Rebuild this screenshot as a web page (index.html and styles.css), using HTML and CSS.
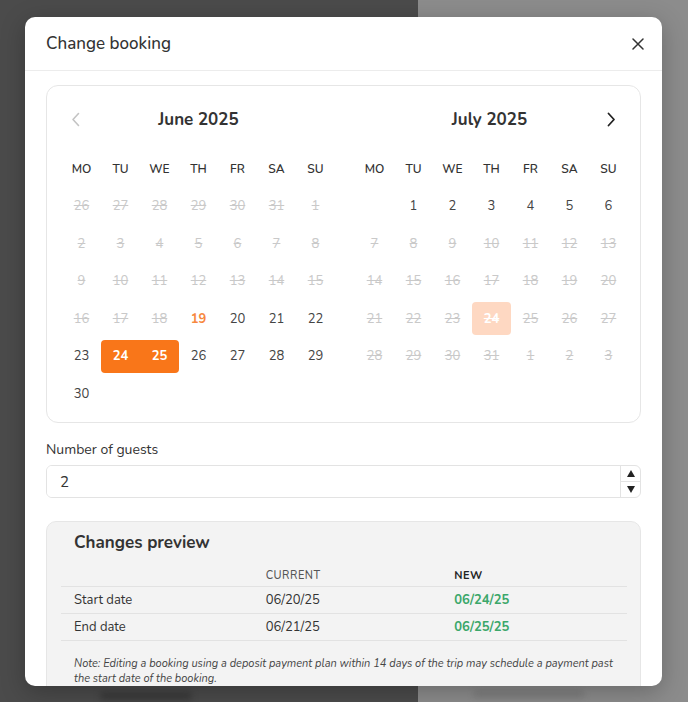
FILE: index.html
```html
<!DOCTYPE html>
<html lang="en">
<head>
    <meta charset="UTF-8">
    <meta name="viewport" content="width=device-width, initial-scale=1.0">
    <title>Change booking</title>
    <link rel="stylesheet" href="styles.css">
</head>
<body>
    <div class="page">
        <div class="page-main">
            <span class="ghost ghost-bottom"></span>
        </div>
        <div class="page-side">
            <span class="ghost ghost-side"></span>
        </div>
    </div>

    <div class="modal">
        <div class="modal-header">
            <h2>Change booking</h2>
            <button class="close" aria-label="Close">
                <svg width="12" height="12" viewBox="0 0 12 12"><path d="M1 1L11 11M11 1L1 11" stroke="#333" stroke-width="1.5" stroke-linecap="round"/></svg>
            </button>
        </div>

        <div class="modal-body">
            <div class="calendar">
                <div class="month">
                    <div class="month-head">
                        <button class="nav nav-disabled" aria-label="Previous month">
                            <svg width="9" height="15" viewBox="0 0 9 15"><path d="M7.5 1.5L2 7.5L7.5 13.5" fill="none" stroke="#c4c4c4" stroke-width="1.6" stroke-linecap="round" stroke-linejoin="round"/></svg>
                        </button>
                        <span class="month-title">June 2025</span>
                        <span class="nav-space"></span>
                    </div>
                    <div class="days" id="june"></div>
                </div>
                <div class="month">
                    <div class="month-head">
                        <span class="nav-space"></span>
                        <span class="month-title">July 2025</span>
                        <button class="nav nav-next" aria-label="Next month">
                            <svg width="9" height="15" viewBox="0 0 9 15"><path d="M1.5 1.5L7 7.5L1.5 13.5" fill="none" stroke="#222" stroke-width="1.8" stroke-linecap="round" stroke-linejoin="round"/></svg>
                        </button>
                    </div>
                    <div class="days" id="july"></div>
                </div>
            </div>

            <div class="field">
                <label for="guests">Number of guests</label>
                <div class="number-input">
                    <input type="text" id="guests" value="2">
                    <div class="spinner">
                        <span class="spin-up"></span>
                        <span class="spin-down"></span>
                    </div>
                </div>
            </div>

            <div class="preview">
                <h3>Changes preview</h3>
                <table>
                    <thead>
                        <tr><th></th><th>Current</th><th class="th-new">New</th></tr>
                    </thead>
                    <tbody>
                        <tr><td>Start date</td><td>06/20/25</td><td class="new">06/24/25</td></tr>
                        <tr><td>End date</td><td>06/21/25</td><td class="new">06/25/25</td></tr>
                    </tbody>
                </table>
                <p class="note">Note: Editing a booking using a deposit payment plan within 14 days of the trip may schedule a payment past the start date of the booking.</p>
            </div>
        </div>
    </div>

    <script>
        const weekdays = ['MO', 'TU', 'WE', 'TH', 'FR', 'SA', 'SU'];

        // [label, class]
        const june = [];
        [26, 27, 28, 29, 30, 31].forEach(d => june.push([d, 'off']));
        for (let d = 1; d <= 18; d++) june.push([d, 'off']);
        june.push([19, 'today']);
        for (let d = 20; d <= 30; d++) {
            let cls = '';
            if (d === 24) cls = 'sel sel-start';
            if (d === 25) cls = 'sel sel-end';
            june.push([d, cls]);
        }

        const july = [['', 'empty']];
        for (let d = 1; d <= 6; d++) july.push([d, '']);
        for (let d = 7; d <= 31; d++) july.push([d, d === 24 ? 'off hover' : 'off']);
        for (let d = 1; d <= 3; d++) july.push([d, 'off']);

        function render(id, days) {
            const el = document.getElementById(id);
            weekdays.forEach(w => {
                const s = document.createElement('span');
                s.className = 'wd';
                s.textContent = w;
                el.appendChild(s);
            });
            days.forEach(([d, cls]) => {
                const s = document.createElement('span');
                s.className = 'day ' + cls;
                s.textContent = d;
                el.appendChild(s);
            });
        }

        render('june', june);
        render('july', july);
    </script>
</body>
</html>
```

FILE: styles.css
```css
/* page behind the modal */
body {
    margin: 0;
    font-family: 'Nunito', 'Lato', 'Noto Sans', sans-serif;
    color: #333;
    height: 702px;
    overflow: hidden;
}

.page {
    display: flex;
    height: 100%;
}

.page-main {
    width: 418px;
    background: #4b4b4b;
    position: relative;
}

.page-side {
    flex: 1;
    background: #8c8c8c;
    position: relative;
}

/* blurred content of the page under the overlay */
.ghost {
    position: absolute;
    height: 8px;
    border-radius: 4px;
    filter: blur(3px);
}

.ghost-bottom {
    top: 692px;
    left: 100px;
    width: 92px;
    background: #3a3a3a;
}

.ghost-side {
    top: 690px;
    left: 56px;
    width: 110px;
    background: #7e7e7e;
}

/* modal */
.modal {
    position: absolute;
    top: 17px;
    left: 25px;
    width: 637px;
    height: 669px;
    background: #fff;
    border-radius: 10px;
    box-shadow: 0 6px 24px rgba(0, 0, 0, 0.25);
    overflow: hidden;
}

.modal-header {
    display: flex;
    align-items: center;
    justify-content: space-between;
    height: 53px;
    padding: 0 14px 0 21px;
    border-bottom: 1px solid #ececec;
}

.modal-header h2 {
    margin: 0;
    font-size: 17px;
    font-weight: 500;
    color: #333;
}

.close {
    border: none;
    background: none;
    padding: 4px;
    display: flex;
    cursor: pointer;
}

.modal-body {
    padding: 14px 21px 0 21px;
}

/* calendar */
.calendar {
    display: flex;
    gap: 20px;
    border: 1px solid #e6e6e6;
    border-radius: 12px;
    padding: 20px 12px 12px 15px;
}

.month-head {
    display: flex;
    align-items: center;
    height: 26px;
    margin-bottom: 20px;
}

.nav,
.nav-space {
    width: 26px;
    height: 26px;
}

.nav {
    border: none;
    background: none;
    padding: 0;
    display: flex;
    align-items: center;
    justify-content: center;
    cursor: pointer;
}

.nav-next {
    margin-right: 4px;
}

.nav-disabled {
    cursor: default;
}

.month-title {
    flex: 1;
    text-align: center;
    font-size: 17px;
    font-weight: 700;
    color: #333;
}

.days {
    display: grid;
    grid-template-columns: repeat(7, 39px);
    grid-auto-rows: 33px;
    row-gap: 4.5px;
}

.wd,
.day {
    display: flex;
    align-items: center;
    justify-content: center;
    font-size: 13px;
}

.wd {
    font-size: 12px;
    font-weight: 600;
    color: #333;
}

.day {
    color: #444;
}

.day.off {
    color: #c9c9c9;
    text-decoration: line-through;
}

.day.today {
    color: #f7883f;
    font-weight: 700;
}

.day.sel {
    background: #f97619;
    color: #fff;
    font-weight: 700;
}

.sel-start {
    border-radius: 4px 0 0 4px;
}

.sel-end {
    border-radius: 0 4px 4px 0;
}

.day.hover {
    background: #fed8c2;
    color: #fff;
    font-weight: 700;
    border-radius: 4px;
}

/* guests */
.field {
    margin-top: 17px;
}

.field label {
    display: block;
    font-size: 14px;
    color: #333;
    margin-bottom: 6px;
}

.number-input {
    display: flex;
    height: 33px;
    border: 1px solid #e3e3e3;
    border-radius: 6px;
    box-sizing: border-box;
    overflow: hidden;
}

.number-input input {
    flex: 1;
    border: none;
    outline: none;
    padding: 0 13px;
    font-family: inherit;
    font-size: 15px;
    color: #333;
}

.spinner {
    width: 19px;
    display: flex;
    flex-direction: column;
    border-left: 1px solid #e3e3e3;
}

.spinner span {
    flex: 1;
    display: flex;
    align-items: center;
    justify-content: center;
}

.spin-up {
    border-bottom: 1px solid #e3e3e3;
}

.spin-up::after,
.spin-down::after {
    content: '';
    border-left: 4.5px solid transparent;
    border-right: 4.5px solid transparent;
}

.spin-up::after {
    border-bottom: 7px solid #222;
}

.spin-down::after {
    border-top: 7px solid #222;
}

/* preview */
.preview {
    margin-top: 23px;
    background: #f3f3f3;
    border: 1px solid #e6e6e6;
    border-radius: 10px;
    padding: 9px 13px 14px 14px;
}

.preview h3 {
    margin: 0 0 11px 13px;
    font-size: 17px;
    font-weight: 700;
    color: #333;
}

table {
    width: 100%;
    border-collapse: collapse;
    table-layout: fixed;
}

th,
td {
    text-align: left;
    padding: 0 13px;
    border-bottom: 1px solid #e2e2e2;
}

th + th,
td + td {
    padding-left: 16px;
}

th {
    height: 21px;
    font-size: 11px;
    font-weight: 500;
    letter-spacing: 0.5px;
    text-transform: uppercase;
    color: #555;
}

th.th-new {
    font-weight: 700;
    color: #222;
}

td {
    height: 26px;
    font-size: 13px;
    color: #333;
}

td.new {
    color: #3ba76a;
    font-weight: 700;
}

.note {
    margin: 15px 0 0 13px;
    font-size: 11px;
    font-style: italic;
    line-height: 15px;
    color: #444;
}
```
